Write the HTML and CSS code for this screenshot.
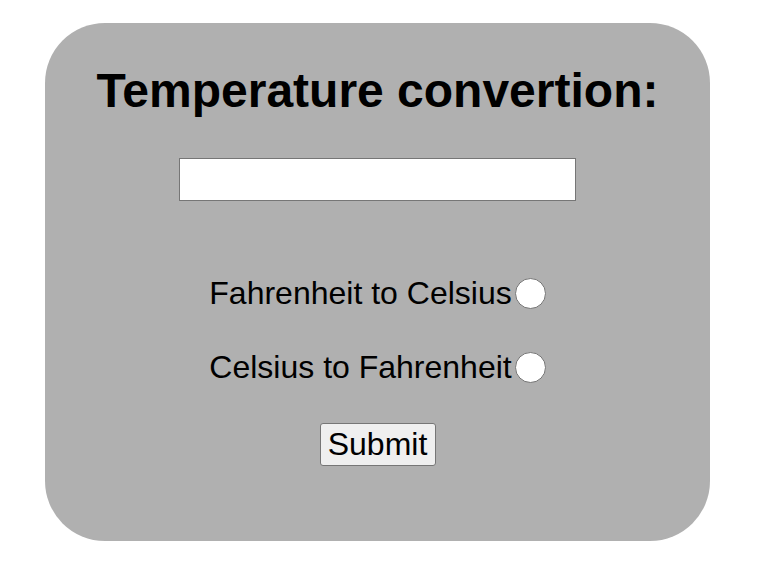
FILE: index.html
```html
<!DOCTYPE html>
<html>
<head>
<meta charset="utf-8">
<link rel="stylesheet" href="styles.css">
</head>
<body>
<main class="card">
  <h1 class="title">Temperature convertion:</h1>
  <input class="temp-input" type="text">
  <div class="options">
    <label class="option">Fahrenheit to Celsius<input class="radio" type="radio" name="mode"></label>
    <label class="option">Celsius to Fahrenheit<input class="radio" type="radio" name="mode"></label>
  </div>
  <button class="submit" type="button">Submit</button>
</main>
</body>
</html>
```
FILE: styles.css
```css
html, body {
  margin: 0;
  padding: 0;
  background: #ffffff;
}
body {
  font-family: "Liberation Sans", Arial, sans-serif;
}
.card {
  box-sizing: border-box;
  width: 665px;
  height: 518px;
  margin: 23px 0 0 45px;
  background: #b0b0b0;
  border-radius: 60px;
  display: flex;
  flex-direction: column;
  align-items: center;
  padding-top: 44px;
}
.title {
  margin: 0;
  font-size: 48px;
  font-weight: bold;
  line-height: 1;
  color: #000;
}
.temp-input {
  box-sizing: border-box;
  margin-top: 43px;
  width: 397px;
  height: 43px;
  border: 1px solid #767676;
  background: #fff;
  border-radius: 0;
  padding: 0 4px;
  font-size: 20px;
}
.options {
  margin-top: 76px;
  display: flex;
  flex-direction: column;
  gap: 42px;
  align-items: center;
}
.option {
  display: flex;
  align-items: center;
  font-size: 32px;
  line-height: 32px;
  color: #000;
}
.radio {
  appearance: none;
  -webkit-appearance: none;
  margin: 0 0 0 3px;
  width: 31px;
  height: 31px;
  border-radius: 50%;
  border: 1px solid #767676;
  background: #fff;
  box-sizing: border-box;
}
.submit {
  margin-top: 40px;
  width: 116px;
  height: 43px;
  font-family: "Liberation Sans", Arial, sans-serif;
  font-size: 32px;
  padding: 0;
  background: #efefef;
  border: 1px solid #767676;
  border-radius: 3px;
  color: #000;
}
```
